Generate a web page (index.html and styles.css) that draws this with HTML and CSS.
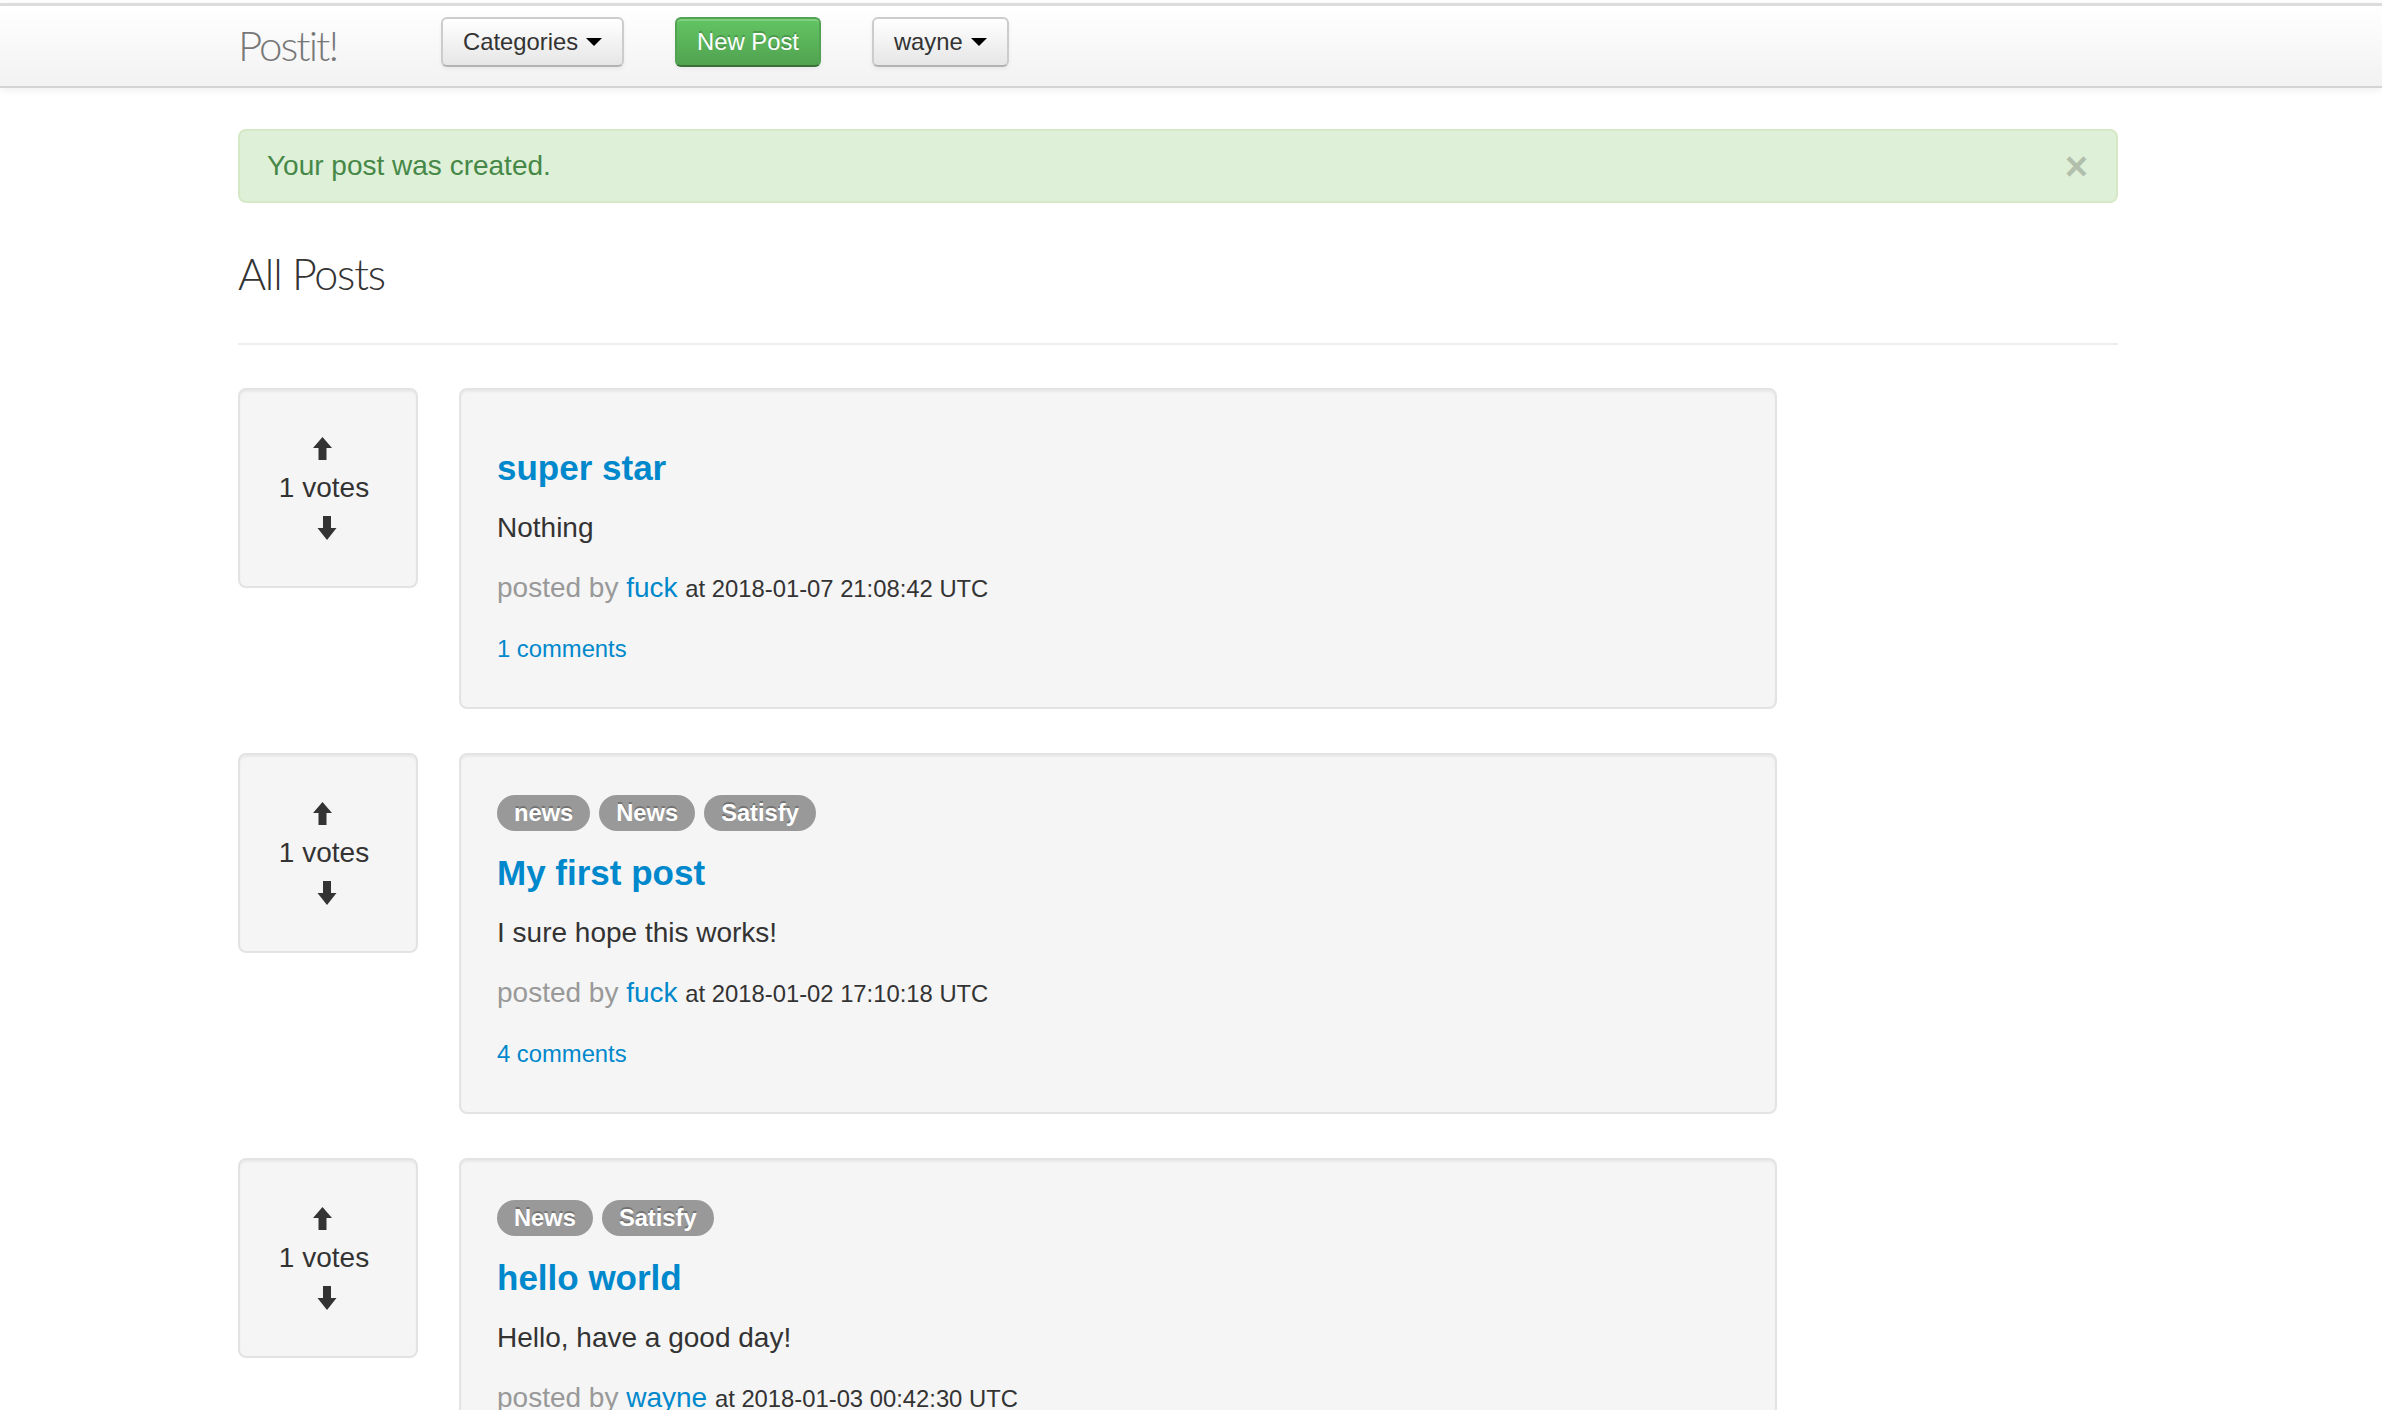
FILE: index.html
```html
<!DOCTYPE html>
<html lang="en">
<head>
<meta charset="utf-8">
<title>Postit!</title>
<link rel="stylesheet" href="styles.css">
</head>
<body>
<div class="navbar">
  <div class="navbar-inner">
    <div class="container nav-container">
      <a class="brand" href="#">Postit!</a>
      <div class="nav-buttons">
        <a class="btn" href="#">Categories <span class="caret"></span></a>
        <a class="btn btn-success" href="#">New Post</a>
        <a class="btn" href="#">wayne <span class="caret"></span></a>
      </div>
    </div>
  </div>
</div>

<div class="container main">
  <div class="alert">
    <span>Your post was created.</span>
    <a class="close" href="#">&times;</a>
  </div>

  <div class="page-header">
    <h1>All Posts</h1>
  </div>

  <div class="post-row">
    <div class="well vote">
      <a class="vote-line" href="#"><svg class="arrow" viewBox="0 0 28 28"><path d="M12.5 3 L22 14 L16.5 14 L16.5 26 L8.5 26 L8.5 14 L3 14 Z"/></svg></a>
      <div class="vote-line">1 votes</div>
      <a class="vote-line" href="#"><svg class="arrow" viewBox="0 0 28 28"><path d="M13 2 L21 2 L21 14 L26.5 14 L17 26 L7.5 14 L13 14 Z"/></svg></a>
    </div>
    <div class="well post">
      <h4><a href="#">super star</a></h4>
      <p>Nothing</p>
      <p><span class="quiet">posted by</span> <a href="#">fuck</a> <small>at 2018-01-07 21:08:42 UTC</small></p>
      <div class="comments"><a href="#">1 comments</a></div>
    </div>
  </div>

  <div class="post-row">
    <div class="well vote">
      <a class="vote-line" href="#"><svg class="arrow" viewBox="0 0 28 28"><path d="M12.5 3 L22 14 L16.5 14 L16.5 26 L8.5 26 L8.5 14 L3 14 Z"/></svg></a>
      <div class="vote-line">1 votes</div>
      <a class="vote-line" href="#"><svg class="arrow" viewBox="0 0 28 28"><path d="M13 2 L21 2 L21 14 L26.5 14 L17 26 L7.5 14 L13 14 Z"/></svg></a>
    </div>
    <div class="well post">
      <div class="tags">
        <span class="badge">news</span>
        <span class="badge">News</span>
        <span class="badge">Satisfy</span>
      </div>
      <h4><a href="#">My first post</a></h4>
      <p>I sure hope this works!</p>
      <p><span class="quiet">posted by</span> <a href="#">fuck</a> <small>at 2018-01-02 17:10:18 UTC</small></p>
      <div class="comments"><a href="#">4 comments</a></div>
    </div>
  </div>

  <div class="post-row">
    <div class="well vote">
      <a class="vote-line" href="#"><svg class="arrow" viewBox="0 0 28 28"><path d="M12.5 3 L22 14 L16.5 14 L16.5 26 L8.5 26 L8.5 14 L3 14 Z"/></svg></a>
      <div class="vote-line">1 votes</div>
      <a class="vote-line" href="#"><svg class="arrow" viewBox="0 0 28 28"><path d="M13 2 L21 2 L21 14 L26.5 14 L17 26 L7.5 14 L13 14 Z"/></svg></a>
    </div>
    <div class="well post">
      <div class="tags">
        <span class="badge">News</span>
        <span class="badge">Satisfy</span>
      </div>
      <h4><a href="#">hello world</a></h4>
      <p>Hello, have a good day!</p>
      <p><span class="quiet">posted by</span> <a href="#">wayne</a> <small>at 2018-01-03 00:42:30 UTC</small></p>
    </div>
  </div>
</div>
</body>
</html>
```

FILE: styles.css
```css
html, body {
  margin: 0;
  padding: 0;
  background: #ffffff;
}

body {
  font-family: "Liberation Sans", Helvetica, Arial, sans-serif;
  font-size: 28px;
  line-height: 40px;
  color: #333333;
}

a {
  color: #0088cc;
  text-decoration: none;
}

.container {
  width: 1880px;
  margin-left: 238px;
}

/* Navbar */
.navbar {
  padding-top: 3px;
}

.navbar-inner {
  height: 80px;
  border-top: 3px solid #dcdcdc;
  border-bottom: 2px solid #d4d4d4;
  background: linear-gradient(to bottom, #ffffff, #f2f2f2);
  box-shadow: 0 2px 8px rgba(0, 0, 0, 0.065);
}

.nav-container {
  display: flex;
  align-items: flex-start;
}

.brand {
  width: 203px;
  font-family: Lato, "Liberation Sans", sans-serif;
  font-weight: 300;
  font-size: 42px;
  line-height: 78px;
  letter-spacing: -2px;
  color: #777777;
}

.nav-buttons {
  display: flex;
  gap: 51px;
  margin-top: 11px;
}

.btn {
  display: inline-flex;
  align-items: center;
  height: 46px;
  padding: 0 20px;
  font-size: 23.8px;
  line-height: 34px;
  color: #333333;
  border: 2px solid #cccccc;
  border-bottom-color: #b3b3b3;
  border-radius: 6px;
  background: linear-gradient(to bottom, #ffffff, #e6e6e6);
  box-shadow: inset 0 2px 0 rgba(255, 255, 255, 0.2), 0 2px 4px rgba(0, 0, 0, 0.05);
}

.btn-success {
  color: #ffffff;
  text-shadow: 0 -2px 0 rgba(0, 0, 0, 0.2);
  background: linear-gradient(to bottom, #62c462, #51a351);
  border-color: #51a351 #51a351 #387038;
}

.caret {
  display: inline-block;
  width: 0;
  height: 0;
  margin-left: 8px;
  border-top: 8px solid #000000;
  border-left: 8px solid transparent;
  border-right: 8px solid transparent;
}

/* Main */
.main {
  padding-top: 41px;
}

.alert {
  display: flex;
  justify-content: space-between;
  align-items: center;
  padding: 15px 28px 15px 27px;
  color: #468847;
  background: #dff0d8;
  border: 2px solid #d6e9c6;
  border-radius: 8px;
}

.close {
  font-size: 40px;
  font-weight: bold;
  line-height: 40px;
  color: #000000;
  opacity: 0.2;
}

.page-header {
  margin: 41px 0 43px;
  padding-bottom: 39px;
  border-bottom: 2px solid #eeeeee;
}

.page-header h1 {
  margin: 0;
  font-family: Lato, "Liberation Sans", sans-serif;
  font-weight: 300;
  font-size: 43px;
  line-height: 60px;
  letter-spacing: -1.2px;
  color: #333333;
}

.post-row {
  display: flex;
  align-items: flex-start;
  gap: 41px;
  margin-bottom: 44px;
}

.well {
  background: #f5f5f5;
  border: 2px solid #e3e3e3;
  border-radius: 8px;
  box-shadow: inset 0 2px 2px rgba(0, 0, 0, 0.05);
}

.vote {
  width: 100px;
  padding: 38px 42px 38px 34px;
  display: flex;
  flex-direction: column;
  align-items: center;
}

.vote-line {
  height: 40px;
  display: flex;
  align-items: center;
  justify-content: center;
  white-space: nowrap;
  color: #333333;
}

.arrow {
  width: 28px;
  height: 28px;
  fill: #333333;
}

.post {
  width: 1240px;
  padding: 38px 38px 38px 36px;
}

.post h4 {
  margin: 20px 0;
  font-size: 35px;
  font-weight: bold;
  line-height: 40px;
}

.post p {
  margin: 0 0 20px;
}

.quiet {
  color: #999999;
}

small {
  font-size: 23.8px;
}

.comments {
  font-size: 23.8px;
  line-height: 40px;
}

.tags {
  display: flex;
  align-items: center;
  gap: 9px;
  height: 40px;
}

.badge {
  display: inline-block;
  padding: 4px 17px;
  font-size: 23.7px;
  font-weight: bold;
  line-height: 28px;
  color: #ffffff;
  text-shadow: 0 -2px 0 rgba(0, 0, 0, 0.25);
  background: #999999;
  border-radius: 18px;
}
```
